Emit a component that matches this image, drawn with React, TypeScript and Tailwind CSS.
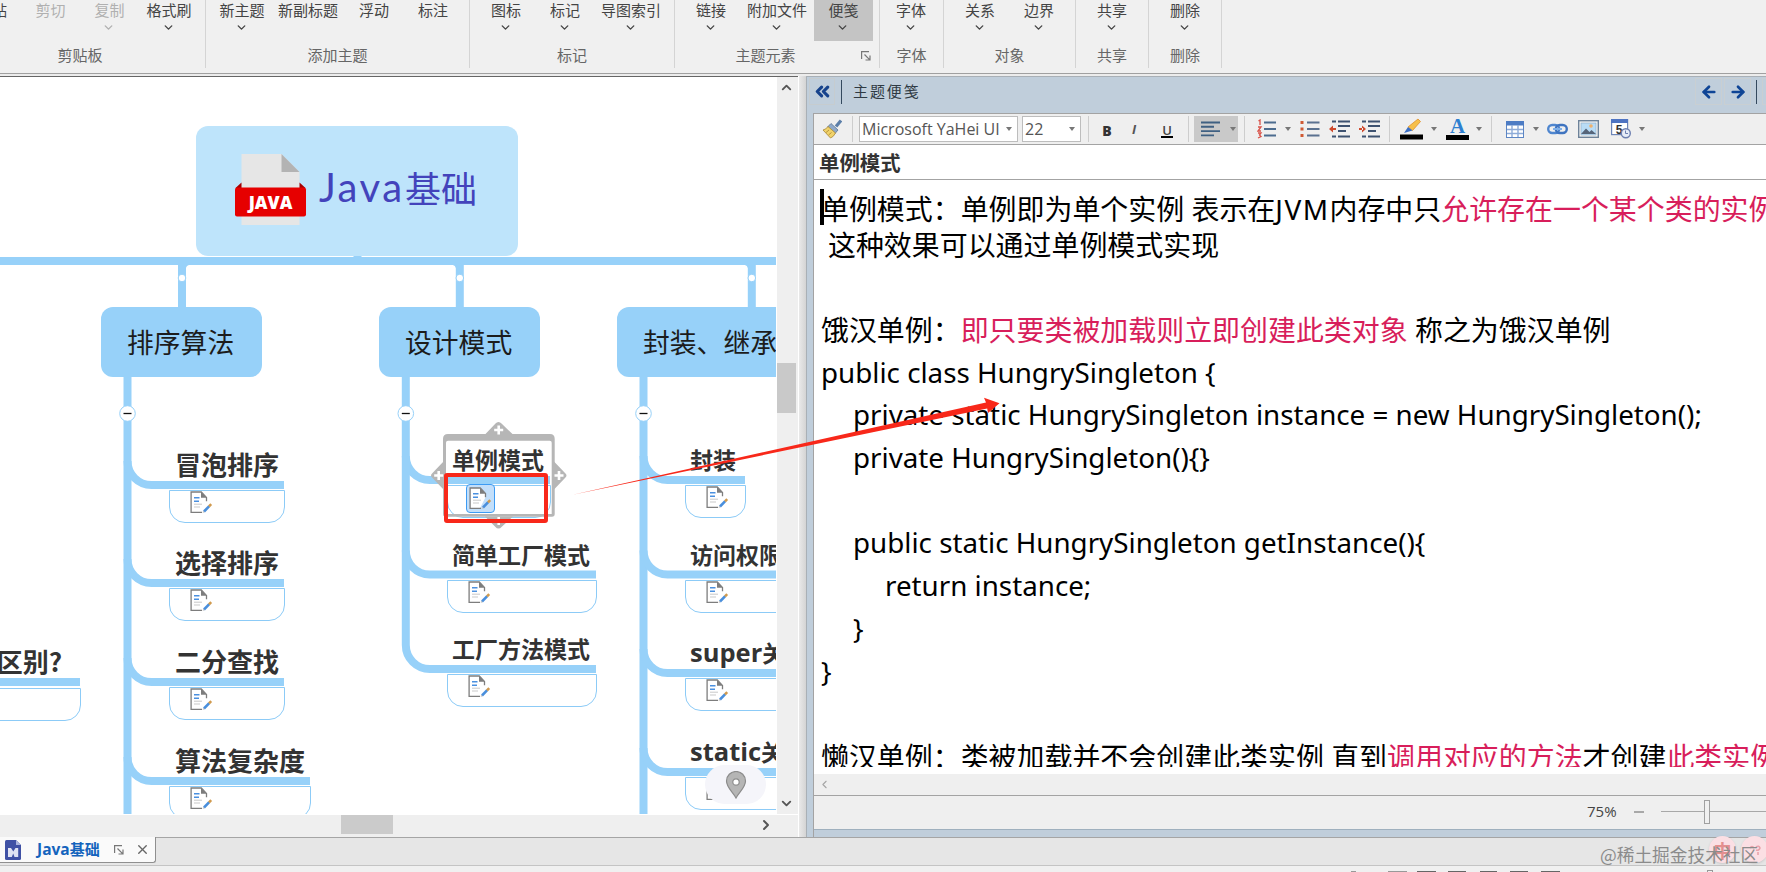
import type { ReactNode } from 'react'
import { ArrowLeft, ArrowRight, ChevronDown, ChevronRight, ChevronUp, ChevronsLeft, X } from 'lucide-react'

interface RibbonItem {
  label: string
  cls: string
  arrow?: boolean
  disabled?: boolean
  active?: boolean
}

interface RibbonGroup {
  title: string
  cls: string
  titleCls?: string
  launcher?: boolean
  items: RibbonItem[]
}

const ribbon: RibbonGroup[] = [
  {
    title: '剪贴板',
    cls: 'w-[206px]',
    titleCls: 'pr-[45px]',
    items: [
      { label: '贴', cls: '-ml-2 w-[15px]' },
      { label: '剪切', cls: 'ml-[27px] w-[33px]', disabled: true },
      { label: '复制', cls: 'ml-[26px] w-[33px]', arrow: true, disabled: true },
      { label: '格式刷', cls: 'ml-[19px] w-[48px]', arrow: true },
    ],
  },
  {
    title: '添加主题',
    cls: 'w-[264px]',
    items: [
      { label: '新主题', cls: 'ml-3 w-[48px]', arrow: true },
      { label: '新副标题', cls: 'ml-[11px] w-[62px]' },
      { label: '浮动', cls: 'ml-[19px] w-8' },
      { label: '标注', cls: 'ml-[27px] w-8' },
    ],
  },
  {
    title: '标记',
    cls: 'w-[205px]',
    items: [
      { label: '图标', cls: 'ml-5 w-8', arrow: true },
      { label: '标记', cls: 'ml-[27px] w-8', arrow: true },
      { label: '导图索引', cls: 'ml-[19px] w-[62px]', arrow: true },
    ],
  },
  {
    title: '主题元素',
    cls: 'w-[205px]',
    titleCls: 'pr-[23px]',
    launcher: true,
    items: [
      { label: '链接', cls: 'ml-5 w-8', arrow: true },
      { label: '附加文件', cls: 'ml-[19px] w-[62px]', arrow: true },
      { label: '便笺', cls: 'ml-[6px] w-[59px]', arrow: true, active: true },
    ],
  },
  { title: '字体', cls: 'w-16', items: [{ label: '字体', cls: 'ml-[15px] w-8', arrow: true }] },
  {
    title: '对象',
    cls: 'w-[132px]',
    items: [
      { label: '关系', cls: 'ml-5 w-8', arrow: true },
      { label: '边界', cls: 'ml-[27px] w-8', arrow: true },
    ],
  },
  { title: '共享', cls: 'w-[73px]', items: [{ label: '共享', cls: 'ml-5 w-8', arrow: true }] },
  { title: '删除', cls: 'w-[73px]', items: [{ label: '删除', cls: 'ml-5 w-8', arrow: true }] },
]

// ── Mind map data ──────────────────────────────────────────────────────────────

interface Leaf {
  text: string
  y: number // centre of the underline
  end: number // right end of the underline
  selected?: boolean
}

interface Branch {
  text: string
  x: number
  w: number
  trunk: number
  stub: number
  size: 'lg' | 'md'
  leaves: Leaf[]
}

const branches: Branch[] = [
  {
    text: '排序算法', x: 101, w: 161, trunk: 127.5, stub: 182, size: 'lg',
    leaves: [
      { text: '冒泡排序', y: 485, end: 284 },
      { text: '选择排序', y: 583, end: 284 },
      { text: '二分查找', y: 682, end: 284 },
      { text: '算法复杂度', y: 781, end: 310 },
    ],
  },
  {
    text: '设计模式', x: 379, w: 161, trunk: 405.8, stub: 459.8, size: 'md',
    leaves: [
      { text: '单例模式', y: 480, end: 550, selected: true },
      { text: '简单工厂模式', y: 574.5, end: 596 },
      { text: '工厂方法模式', y: 669, end: 596 },
    ],
  },
  {
    text: '封装、继承、多态', x: 617, w: 270, trunk: 643.5, stub: 751.8, size: 'md',
    leaves: [
      { text: '封装', y: 480, end: 745 },
      { text: '访问权限修饰符', y: 574.5, end: 860 },
      { text: 'super关键字', y: 673, end: 860 },
      { text: 'static关键字', y: 772, end: 860 },
    ],
  },
]

const TOP = 77 // canvas offset below the ribbon

function NoteIcon() {
  return (
    <svg width="23" height="23" viewBox="0 0 23 23" fill="none">
      <path d="M11 21.2H1V1h10.5l5 5.2v4" fill="#fff" />
      <path d="M12 21.3H1.1V1h10.2l5.2 5.4v3.8" stroke="#7d7d7d" strokeWidth="1.3" />
      <path d="M11 1l5.5 5.8H11z" fill="#7d7d7d" />
      <path d="M4 6.8h5.5M4 10.3h5" stroke="#4a90e0" strokeWidth="1.5" />
      <path d="M4 13.2h8M4 16h6" stroke="#c9c9c9" strokeWidth="1" />
      <path d="M14 20.5l5.2-5.3" stroke="#4a8fdc" strokeWidth="2.6" />
      <path d="M19 15.4l2.2-2.2" stroke="#d09a4e" strokeWidth="2.6" />
      <path d="M12.6 21.8l.5-2 1.6 1.5z" fill="#bbb" />
    </svg>
  )
}

function Connectors() {
  return (
    <svg className="absolute left-0 top-0" width="776" height="737" viewBox="0 77 776 737" fill="none" stroke="#97d1f9" strokeWidth="8">
      <path d="M0 261H776M357.5 254V262" />
      {branches.map((b, i) => {
        const last = b.leaves[b.leaves.length - 1]
        const closed = i === 1
        return (
          <g key={b.text}>
            <path d={`M${b.stub} 261V310`} />
            <path
              d={i === 0 ? `M${b.stub + 3.5} 264.5h6q-6 0 -6 6z` : `M${b.stub - 3.5} 264.5h-6q6 0 6 6z`}
              fill="#97d1f9"
              stroke="none"
            />
            <circle cx={b.stub} cy="278" r="3.8" fill="#fff" strokeWidth="1" />
            <path d={`M${b.trunk} 370V${closed ? last.y - 24 : 820}`} />
            {b.leaves.map((l) => (
              <path key={l.text} d={`M${b.trunk} ${l.y - 24}a24 24 0 0 0 24 24H${l.end}`} />
            ))}
            <circle cx={b.trunk} cy="413.5" r="7.8" fill="#fff" strokeWidth="1" />
            <path d={`M${b.trunk - 4} 413.5h8`} stroke="#111" strokeWidth="1.3" />
          </g>
        )
      })}
      <path d="M0 682H80" />
    </svg>
  )
}

function LeafNode({ leaf, branch }: { leaf: Leaf; branch: Branch }) {
  const left = Math.floor(branch.trunk + 41.5)
  const lg = branch.size === 'lg'
  return (
    <div className="absolute" style={{ left, top: Math.round(leaf.y - 40 - TOP), width: leaf.end - left + 1 }}>
      <div
        className={`flex h-[39px] items-center whitespace-nowrap font-bold text-[#333] ${
          lg ? 'pb-[3px] pl-[6px] text-[26px]' : 'pl-[5px] text-[23px]'
        }`}
      >
        {leaf.text.match(/^[a-z]+/) ? (
          <>
            <span className="font-['Open_Sans'] text-[25.500px]">{leaf.text.replace(/[^a-z]/g, '')}</span>
            {leaf.text.replace(/[a-z]/g, '')}
          </>
        ) : (
          leaf.text
        )}
      </div>
      <div className="mt-[6px] h-[33px] rounded-b-2xl border border-[#8ccbf7] pl-5">
        {leaf.selected ? (
          <div className="-ml-[2px] -mt-[2px] flex h-[29px] w-[29px] items-center justify-center rounded border-[1.5px] border-[#3d9bf3] bg-[#c3dffa]">
            <NoteIcon />
          </div>
        ) : (
          <NoteIcon />
        )}
      </div>
    </div>
  )
}

function SelectionFrame() {
  return (
    <svg className="absolute left-[430px] top-[344px]" width="138" height="109" viewBox="430 421 138 109">
      <g fill="#b6b6b6">
        <path
          fillRule="evenodd"
          d="M448 434h102q4.700 0 4.700 4.700V514q0 2.700-2.700 2.700H445.500q-2.500 0-2.500-2.700V438.700q0-4.700 5-4.700zM448 440.700q-2 0-2 2V514h105.700V442.700q0-2-2-2z"
        />
        <path d="M485 434.500l10.500-11q1.200-1.500 3-1.500t3 1.500l11.500 11z" />
        <path d="M485 516.500l10.500 10.500q1.200 1.500 3 1.500t3-1.500l11.500-10.500z" />
        <path d="M443.500 461.500l-11 11.500q-1.500 1.200-1.500 2.500t1.500 2.500l11 11.500z" />
        <path d="M554 461.500l11 11.500q1.500 1.200 1.500 2.500t-1.500 2.500l-11 11.500z" />
      </g>
      <path
        d="M498.700 425.500v9M494.200 430h9M438.700 471v9M434.200 475.500h9M559 471v9M554.500 475.500h9M498.700 517v8M494.200 521h9"
        stroke="#fff"
        strokeWidth="2.6"
      />
    </svg>
  )
}

function JavaFileIcon() {
  return (
    <svg width="72" height="72" viewBox="0 0 72 72">
      <path d="M6.500 0H46.500L64.500 18V71H6.500z" fill="#e6e6e6" />
      <path d="M46.500 0L64.500 18H46.500z" fill="#b3b3b3" />
      <path d="M6.500 28.500L.5 34h6zM64.500 28.500l6 5.500h-6z" fill="#a80000" />
      <rect x="0" y="33.500" width="71" height="29" rx="2" fill="#e60000" />
      <text x="35.500" y="55" textAnchor="middle" fontFamily="'Open Sans'" fontWeight="800" fontSize="17.500" fill="#fff">
        JAVA
      </text>
    </svg>
  )
}

function MindMap() {
  return (
    <div className="relative h-[737px] w-[776px] overflow-hidden bg-white">
      <Connectors />

      <div className="absolute left-[196px] top-[49px] flex h-[130px] w-[322px] items-center rounded-xl bg-[#bee4fb] pl-[39px]">
        <div className="-mt-[2px]">
          <JavaFileIcon />
        </div>
        <span className="-mt-2 ml-3 flex items-center whitespace-nowrap text-[36px] text-[#4343bb]">
          <span className="w-[86px] font-['Lato'] text-[40px] tracking-[2.500px]">Java</span>基础
        </span>
      </div>

      {branches.map((b) => (
        <div key={b.text}>
          <div
            className="absolute top-[230px] flex h-[70px] items-center whitespace-nowrap rounded-xl bg-[#97d1f9] pl-[26px] text-[26.800px] text-[#1c1c1c]"
            style={{ left: b.x, width: b.w }}
          >
            {b.text}
          </div>
          {b.leaves.map((l) => (
            <LeafNode key={l.text} leaf={l} branch={b} />
          ))}
        </div>
      ))}

      {/* node cut off by the left edge */}
      <div className="absolute -left-[40px] top-[565px] w-[121px]">
        <div className="flex h-[37px] items-center justify-end whitespace-nowrap pr-[19px] text-[26px] font-bold text-[#333]">
          区别?
        </div>
        <div className="mt-[9px] h-[33px] rounded-b-2xl border border-[#8ccbf7]" />
      </div>

      <SelectionFrame />
      <div className="absolute left-[444px] top-[396px] h-[50px] w-[104px] rounded-[3px] border-4 border-[#f8281a]" />

      {/* locate button */}
      <div className="absolute left-[705px] top-[688px] flex h-[39px] w-[61px] items-center justify-center rounded-[20px] bg-[#f5f5fa]">
        <svg width="22" height="28" viewBox="0 0 22 28">
          <path d="M11 27C8 21 1.500 16.500 1.500 10a9.500 9.500 0 0 1 19 0C20.500 16.500 14 21 11 27z" fill="#b5b5b5" stroke="#8c8c8c" strokeWidth="1.200" />
          <circle cx="11" cy="11" r="3.200" fill="#fff" stroke="#8c8c8c" strokeWidth="1.200" />
        </svg>
      </div>
    </div>
  )
}

// ── Ribbon ─────────────────────────────────────────────────────────────────────

function Launcher({ size = 10 }: { size?: number }) {
  return (
    <svg width={size} height={size} viewBox="0 0 10 10" fill="none" stroke="#777" strokeWidth="1.200">
      <path d="M.6 8V.6H8M3.500 3.500L8.800 8.800M9 4.500V9H4.500" />
    </svg>
  )
}

function Ribbon() {
  return (
    <div className="flex h-[73px] bg-[#f0f0f0]">
      {ribbon.map((g, i) => (
        <div key={i} className={`flex h-[68px] shrink-0 flex-col border-r border-[#d4d4d4] ${g.cls}`}>
          <div className="flex h-[41px]">
            {g.items.map((it) => (
              <div
                key={it.label}
                className={`flex shrink-0 flex-col items-center ${it.cls} ${it.active ? 'bg-[#c4c4c4]' : ''} ${
                  it.disabled ? 'text-[#b0b0b0]' : 'text-[#444]'
                }`}
              >
                <span className="h-[21px] whitespace-nowrap text-[15px] leading-[20px]">{it.label}</span>
                {it.arrow && <ChevronDown size={13} strokeWidth={2.6} className="-ml-[2px]" />}
              </div>
            ))}
          </div>
          <div className={`relative mt-[3px] text-center text-[15px] leading-[22px] text-[#666] ${g.titleCls ?? ''}`}>
            {g.title}
            {g.launcher && (
              <span className="absolute right-2 top-[7px]">
                <Launcher />
              </span>
            )}
          </div>
        </div>
      ))}
    </div>
  )
}

// ── Notes panel ────────────────────────────────────────────────────────────────

function Caret({ cls = '' }: { cls?: string }) {
  return <span className={`h-0 w-0 shrink-0 border-x-[3px] border-t-4 border-x-transparent border-t-[#777] ${cls}`} />
}

function Sep({ cls = '' }: { cls?: string }) {
  return <span className={`h-[26px] w-px shrink-0 bg-[#cdcdcd] ${cls}`} />
}

function Glyph({ cls = '', w = 20, h = 20, children }: { cls?: string; w?: number; h?: number; children: ReactNode }) {
  return (
    <svg className={`shrink-0 ${cls}`} width={w} height={h} viewBox={`0 0 ${w} ${h}`} fill="none">
      {children}
    </svg>
  )
}

function Toolbar() {
  return (
    <div className="flex h-[31px] items-center border-b border-[#a3a3a3] bg-[#efefef] text-[#555]">
      <Glyph cls="ml-[8px]">
        <path d="M19 1.500l-5 6" stroke="#5b7ea8" strokeWidth="3.200" />
        <path d="M9 4.500l7 6.500-3 3.500-7.500-6.500z" fill="#8fa9c9" stroke="#5b7596" strokeWidth=".8" />
        <path d="M6 7.500l7.500 6.500q-2 4-5 5L1 11q3-.5 5-3.500z" fill="#f1d36b" stroke="#a98732" strokeWidth=".8" />
        <path d="M4 13.500l3-2.500M6.500 16l3-2.500" stroke="#b9953b" />
      </Glyph>
      <Sep cls="ml-[10px]" />
      <div className="ml-[6px] flex h-[26px] w-[159px] shrink-0 items-center border border-[#bdbdbd] bg-white pl-[2px]">
        <span className="-mt-px whitespace-nowrap font-['Open_Sans'] text-[16px]">Microsoft YaHei UI</span>
        <Caret cls="ml-auto mr-[5px]" />
      </div>
      <div className="ml-1 flex h-[26px] w-[59px] shrink-0 items-center border border-[#bdbdbd] bg-white pl-[2px]">
        <span className="-mt-px font-['Open_Sans'] text-[16px]">22</span>
        <Caret cls="ml-auto mr-[5px]" />
      </div>
      <Sep cls="ml-[7px]" />
      <span className="ml-[12px] mt-[2px] w-3 text-center font-['Open_Sans'] text-[14px] font-extrabold text-[#333]">B</span>
      <span className="ml-[15px] mt-[2px] w-3 text-center font-['Open_Sans'] text-[13px] font-bold italic text-[#555]">I</span>
      <span className="ml-[21px] mt-[4px] flex w-3 flex-col items-center border-b-2 border-black font-['Open_Sans'] text-[13px] font-semibold leading-[12px] text-[#444]">
        U
      </span>
      <Sep cls="ml-[15px]" />
      <div className="ml-[5px] flex h-[26px] w-[44px] shrink-0 items-center bg-[#c9c9c9] pl-[7px]">
        <Glyph h={16}>
          <path d="M0 1.500h19M0 5.800h13M0 10.100h19M0 14.400h13" stroke="#3f6082" strokeWidth="1.900" />
        </Glyph>
        <Caret cls="ml-[9px]" />
      </div>
      <Sep cls="ml-[6px]" />
      <Glyph cls="ml-[12px]">
        <path d="M7 3.500h12M7 10h12M7 16.500h12" stroke="#4c6c8f" strokeWidth="2" />
        <path d="M1.500 2l1.500-1v5M1 8h3l-3 4h3M1 14h3l-1.500 2L4 17.500 1 19" stroke="#d9534a" strokeWidth="1.300" />
      </Glyph>
      <Caret cls="ml-[8px]" />
      <Glyph cls="ml-[9px]">
        <path d="M7 3.500h12.500M7 10h12.500M7 16.500h12.500" stroke="#5a7190" strokeWidth="2" />
        <path d="M.5 2h3v3h-3zM.5 8.500h3v3h-3zM.5 15h3v3h-3z" fill="#cf5a34" />
      </Glyph>
      <Glyph cls="ml-[9px]" w={21}>
        <path d="M3 2.500h4M9 2.500h12M9 7h12M9 12h8M3 17.500h4M9 17.500h12" stroke="#3e5270" strokeWidth="2" />
        <path d="M0 10l4-3.500v7zM3 9h4v2H3z" fill="#cf4b2e" />
      </Glyph>
      <Glyph cls="ml-[9px]" w={21}>
        <path d="M3 2.500h4M9 2.500h12M9 7h12M9 12h8M3 17.500h4M9 17.500h12" stroke="#3e5270" strokeWidth="2" />
        <path d="M7 10L3 6.500v7zM0 9h4v2H0z" fill="#cf4b2e" />
      </Glyph>
      <Sep cls="ml-[9px]" />
      <Glyph cls="ml-[10px]" w={23} h={22}>
        <path d="M18 1l2.500 2.500-8 9-4.500-3.500z" fill="#f6c04a" stroke="#e0902a" strokeWidth=".8" />
        <path d="M8 9l4.500 3.500L4 15z" fill="#3c6fc4" />
        <path d="M0 16.500h23v5H0z" fill="#000" />
      </Glyph>
      <Caret cls="ml-[8px]" />
      <span className="ml-[9px] flex h-[22px] w-[23px] shrink-0 flex-col items-center border-b-[5px] border-black font-['Liberation_Serif'] text-[21px] font-bold leading-[17px] text-[#2e7fd0]">
        A
      </span>
      <Caret cls="ml-[7px]" />
      <Sep cls="ml-[9px]" />
      <Glyph cls="ml-[14px]" w={18} h={17}>
        <rect x=".5" y=".5" width="17" height="16" fill="#fff" stroke="#5d86c4" />
        <path d="M0 0h18v4.500H0z" fill="#4d7cc4" />
        <path d="M6 4v12M12 4v12M1 8.500h16M1 12.500h16" stroke="#8dabd8" strokeWidth="1.400" />
      </Glyph>
      <Caret cls="ml-[9px]" />
      <Glyph cls="ml-[8px]" w={21} h={12}>
        <rect x="1.200" y="2" width="11" height="8" rx="4" stroke="#4f86cf" strokeWidth="2.400" />
        <rect x="8.800" y="2" width="11" height="8" rx="4" stroke="#3f74c0" strokeWidth="2.400" />
        <path d="M6 6h9" stroke="#7eb0ea" strokeWidth="2" />
      </Glyph>
      <Glyph cls="ml-[10px]" w={21} h={18}>
        <rect x=".7" y=".7" width="19.600" height="16.600" fill="#f4f4f4" stroke="#6d8299" strokeWidth="1.400" />
        <rect x="3" y="3" width="15" height="12" fill="#b9dcf6" stroke="#8aa9c4" strokeWidth=".6" />
        <circle cx="13" cy="6" r="1.800" fill="#f0b06a" />
        <path d="M3 14l5-5.500 3.500 3.500 2-2 4.500 4z" fill="#56657a" />
      </Glyph>
      <Glyph cls="ml-[12px]" w={20}>
        <rect x=".6" y=".6" width="16" height="15" fill="#fff" stroke="#6d86b8" strokeWidth="1.200" />
        <path d="M0 0h17v4H0z" fill="#4e74c2" />
        <text x="8" y="14.500" textAnchor="middle" fontFamily="'Liberation Sans'" fontWeight="700" fontSize="12" fill="#333">5</text>
        <circle cx="14.800" cy="14.200" r="4.500" fill="#e6ecf7" stroke="#6d7fb0" strokeWidth="1.400" />
        <path d="M14.500 11.500v3h2.500" stroke="#6d7fb0" />
      </Glyph>
      <Caret cls="ml-[8px]" />
    </div>
  )
}

function Code({ indent = '', children }: { indent?: string; children?: ReactNode }) {
  return <p className={`h-[42.700px] leading-[42.700px] ${indent}`}>{children}</p>
}

function NotesBody() {
  return (
    <div className="h-[587px] overflow-hidden whitespace-nowrap bg-white pl-[7px] pt-[11px] font-['Noto_Sans','Noto_Sans_CJK_SC',sans-serif] text-[27.950px] text-black">
      <p className="relative h-9 leading-9">
        <span className="absolute -left-[1px] -top-[2px] h-9 w-1 bg-black" />
        单例模式：单例即为单个实例 表示在<span className="tracking-[1.500px]">JVM</span>内存中只
        <span className="text-[#d81e5b]">允许存在一个某个类的实例</span>
      </p>
      <p className="h-9 pl-[7px] leading-9">这种效果可以通过单例模式实现</p>
      <p className="h-[46px]" />
      <Code>
        饿汉单例：<span className="text-[#d81e5b]">即只要类被加载则立即创建此类对象</span> 称之为饿汉单例
      </Code>
      <div className="-mt-px mb-px text-[27.750px]">
        <Code>{'public class HungrySingleton {'}</Code>
        <Code indent="pl-8">private static HungrySingleton instance = new HungrySingleton();</Code>
        <Code indent="pl-8">{'private HungrySingleton(){}'}</Code>
        <Code />
        <Code indent="pl-8">{'public static HungrySingleton getInstance(){'}</Code>
        <Code indent="pl-16">return instance;</Code>
        <Code indent="pl-8">{'}'}</Code>
        <Code>{'}'}</Code>
        <Code />
      </div>
      <Code>
        懒汉单例：类被加载并不会创建此类实例 直到<span className="text-[#d81e5b]">调用对应的方法</span>才创建
        <span className="text-[#d81e5b]">此类实例</span>
      </Code>
    </div>
  )
}

function NotesPanel() {
  return (
    <div className="flex min-w-0 flex-1 flex-col border-l border-t border-[#a9b0b6] bg-[#c0cedb] pl-[6px]">
      <div className="-ml-[6px] flex h-[36px] items-start pt-px">
        <div className="ml-[2px] flex h-[27px] w-[26px] items-center justify-center border border-[#c6cccf]">
          <ChevronsLeft size={21} strokeWidth={3.600} className="text-[#17438c]" />
        </div>
        <span className="ml-[6px] mt-[2px] h-6 w-px bg-[#34495e]" />
        <span className="ml-[11px] mt-px text-[15px] leading-6 tracking-[1.900px] text-[#2f3a44]">主题便笺</span>
        <div className="ml-auto flex items-start">
          <div className="flex h-[27px] w-[27px] items-center justify-center border border-[#c9cfd2]">
            <ArrowLeft size={18} strokeWidth={3.600} className="text-[#0f4596]" />
          </div>
          <div className="ml-[2px] flex h-[27px] w-[27px] items-center justify-center border border-[#c9cfd2]">
            <ArrowRight size={18} strokeWidth={3.600} className="text-[#0f4596]" />
          </div>
          <span className="ml-[5px] mt-[2px] h-6 w-px bg-[#34495e]" />
          <span className="ml-[5px] h-[27px] w-[4px] border border-r-0 border-[#c9cfd2]" />
        </div>
      </div>
      <div className="flex flex-1 flex-col border-l border-t border-[#a3a3a3]">
        <Toolbar />
        <div className="flex h-[35px] items-center border-b border-[#a3a3a3] bg-white pl-[5px] text-[20.400px] font-bold text-[#333]">
          单例模式
        </div>
        <NotesBody />
        <div className="h-[7px] bg-white" />
        <div className="flex h-[22px] items-center border-b border-[#a3a3a3] bg-[#efefef] pb-px pl-1">
          <ChevronRight size={13} strokeWidth={2} className="rotate-180 text-[#a5a5a5]" />
        </div>
        <div className="flex h-[33px] items-center bg-[#efefef] pb-[2px]">
          <span className="-mt-[2px] ml-[773px] w-[34px] font-['Open_Sans'] text-[15px] leading-5 text-[#444]">75%</span>
          <span className="ml-[13px] h-[2px] w-[10px] bg-[#a8a8a8]" />
          <span className="ml-[17px] h-px w-[43px] bg-[#a8a8a8]" />
          <span className="h-6 w-[6px] border border-[#a0a0a0] bg-[#f0f0f0]" />
          <span className="h-px flex-1 bg-[#a8a8a8]" />
        </div>
        <div className="h-[8px] border-t border-[#9fb0be] bg-[#c0cedb]" />
      </div>
    </div>
  )
}

// ── Page ───────────────────────────────────────────────────────────────────────

export default function App() {
  return (
    <div className="relative flex h-[872px] w-[1766px] flex-col overflow-hidden bg-[#f0f0f0] font-['Noto_Sans_CJK_SC',sans-serif]">
      <Ribbon />
      <div className="h-[3px] shrink-0 border-t border-[#a0a0a0] bg-[#ececec]" />

      <div className="flex h-[761px] shrink-0">
        <div className="flex w-[798px] flex-col border-t border-[#666] bg-[#efefef]">
          <div className="flex">
            <MindMap />
            <div className="flex h-[737px] w-[22px] flex-col items-center border-l border-white pt-[3px]">
              <ChevronUp size={15} strokeWidth={3} className="-ml-[2px] text-[#555]" />
              <div className="mt-[268px] h-[50px] w-[19px] self-start bg-[#c9c9c9]" />
              <ChevronDown size={15} strokeWidth={3} className="-ml-[2px] mb-[3px] mt-auto text-[#555]" />
            </div>
          </div>
          <div className="flex flex-1 items-center border-t border-white">
            <div className="ml-[341px] h-[19px] w-[52px] self-start bg-[#cbcbcb]" />
            <ChevronRight size={16} strokeWidth={3} className="-mt-[2px] ml-[365px] text-[#555]" />
          </div>
        </div>
        <div className="w-[8px] border-l border-white bg-gradient-to-r from-[#e9e9e9] to-[#d4d4d4]" />
        <NotesPanel />
      </div>

      <div className="flex h-[29px] shrink-0 items-start border-y border-t-[#a5a5a5] border-b-[#c4c4c4] bg-[#e6e6e6]">
        <div className="-mt-px flex h-[26px] w-[156px] items-center rounded-br-[3px] border-b border-r border-[#8f8f8f] bg-[#fafafa]">
          <svg className="ml-[5px]" width="17" height="20" viewBox="0 0 17 20">
            <path d="M1.500 0H11l5 5v13.500q0 1.500-1.500 1.500h-13Q0 20 0 18.500v-17Q0 0 1.500 0z" fill="#3f51a5" />
            <path d="M11 0l5 5h-5z" fill="#aab4dc" />
            <path d="M3 8h3l2.300 3.500L10.500 8h2.700v9h-3.700L8.200 13.500 6.800 17H3z" fill="#dfe3f3" />
          </svg>
          <span className="ml-[15px] text-[15px] font-bold text-[#1464bd]">
            <span className="font-['Open_Sans'] text-[15.500px]">Java</span>基础
          </span>
          <span className="ml-auto">
            <Launcher />
          </span>
          <X size={15} strokeWidth={2.200} className="ml-[11px] mr-[5px] text-[#666]" />
        </div>
      </div>

      {/* tops of the status bar controls */}
      <div className="flex h-[6px] shrink-0 items-end">
        <span className="ml-[1351px] h-px w-[5px] bg-[#999]" />
        <span className="ml-[32px] h-px w-[19px] bg-[#999]" />
        <span className="ml-[10px] h-px w-[19px] bg-[#666]" />
        <span className="ml-[12px] h-px w-[18px] bg-[#666]" />
        <span className="ml-[14px] h-px w-[17px] bg-[#666]" />
        <span className="ml-[13px] h-px w-[18px] bg-[#666]" />
        <span className="ml-[13px] h-px w-[19px] bg-[#666]" />
        <span className="ml-[147px] h-[2px] w-[6px] border border-b-0 border-[#999]" />
      </div>

      {/* input method badges */}
      <div className="absolute left-[1709px] top-[836px] flex gap-[5px]">
        <div className="flex h-[27px] w-[27px] items-center justify-center rounded-full bg-[#fbdfe4] text-[18px] font-bold leading-[22px] text-[#e48f8f] shadow">
          中
        </div>
        <div className="flex h-[27px] w-[27px] items-center justify-center rounded-full bg-[#fbdfe4] shadow">
          <svg width="14" height="14" viewBox="0 0 14 14" fill="none" stroke="#e9a3ab" strokeWidth="1.600">
            <path d="M2 5q2-3 4 0M8 4q3-2 4 1-1 3-4 2M10 9v3" />
          </svg>
        </div>
      </div>
      <div className="absolute left-[1600px] top-[841px] whitespace-nowrap text-[17.700px] leading-[26px] text-[#8b8b8b]">
        @稀土掘金技术社区
      </div>

      {/* annotation arrow */}
      <svg className="pointer-events-none absolute left-0 top-0" width="1766" height="872">
        <path d="M572.700 494.700L986 402.500L984 397.800L999.500 403.300L988 413L987.200 408.500z" fill="#f8281a" />
      </svg>
    </div>
  )
}
